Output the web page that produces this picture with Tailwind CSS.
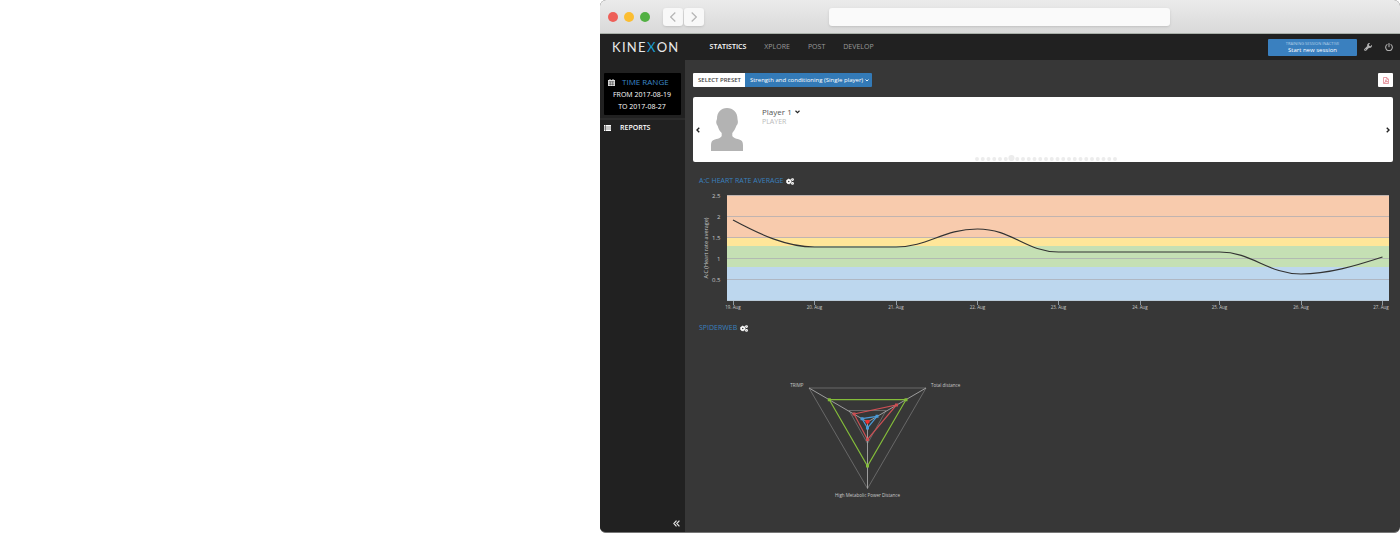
<!DOCTYPE html>
<html lang="en">
<head>
<meta charset="utf-8">
<title>Kinexon – Statistics</title>
<script src="https://cdn.jsdelivr.net/npm/@tailwindcss/browser@4"></script>
</head>
<body class="flex min-h-screen bg-white pl-[600px] font-['Open_Sans',sans-serif] text-white">
<svg class="hidden">
  <symbol id="cogs" viewBox="0 0 16 14">
    <circle cx="5.500" cy="7" r="3.200" fill="none" stroke="currentColor" stroke-width="3.400"/>
    <circle cx="5.500" cy="7" r="4.700" fill="none" stroke="currentColor" stroke-width="1.600" stroke-dasharray="2 1.690"/>
    <circle cx="13" cy="3.200" r="1.800" fill="none" stroke="currentColor" stroke-width="2.200"/>
    <circle cx="13" cy="10.800" r="1.800" fill="none" stroke="currentColor" stroke-width="2.200"/>
  </symbol>
</svg>
<div class="flex min-w-0 flex-1 flex-col overflow-hidden rounded-md border-b border-[#777] bg-[#373737]">

  <div class="flex h-[34px] items-center border-b border-[#a9b0a9] bg-linear-to-b from-[#ebebeb] to-[#d9d9d9] pl-2">
    <div class="flex gap-[6px]">
      <span class="size-[10px] rounded-full bg-[#ee5f58]"></span>
      <span class="size-[10px] rounded-full bg-[#fbbd31]"></span>
      <span class="size-[10px] rounded-full bg-[#52b043]"></span>
    </div>
    <div class="ml-[13px] flex gap-px">
      <button aria-label="Back" class="flex h-[18px] w-5 items-center justify-center rounded-[3px] bg-[#f8f8f8] shadow-sm"><svg class="h-[10px] w-[6px]" viewBox="0 0 6 10" fill="none" stroke="#b5b5b5" stroke-width="1.200"><path d="M5.300.5.700 5l4.600 4.500"/></svg></button>
      <button aria-label="Forward" class="flex h-[18px] w-5 items-center justify-center rounded-[3px] bg-[#f8f8f8] shadow-sm"><svg class="h-[10px] w-[6px]" viewBox="0 0 6 10" fill="none" stroke="#b5b5b5" stroke-width="1.200"><path d="M.700.5 5.300 5 .700 9.500"/></svg></button>
    </div>
    <input aria-label="Address" class="ml-[125px] h-[18px] w-[341px] rounded-[3px] bg-[#fafafa] px-2 text-[9px] text-black shadow-sm">
  </div>

  <header class="flex h-[26px] items-center bg-[#212121] pr-[7px] pl-3">
    <a href="#" aria-label="KINEXON" class="flex font-['Lato',sans-serif] text-[13px] leading-[14px] tracking-widest text-[#e8e8e8]">KINE<span class="text-[#1b9dd0]">X</span>ON</a>
    <nav class="ml-[30px] flex gap-[18px] text-[7px] text-[#9a9a9a]">
      <a href="#" class="font-semibold text-white">STATISTICS</a>
      <a href="#">XPLORE</a>
      <a href="#">POST</a>
      <a href="#">DEVELOP</a>
    </nav>
    <button class="ml-auto flex h-[17px] w-[89px] flex-col items-center justify-center rounded-[1px] bg-[#3a80bf]">
      <span class="text-[4px] leading-[6px] text-[#b5d0e8]">TRAINING SESSION INACTIVE</span>
      <span class="text-[6px] leading-[7px]">Start new session</span>
    </button>
    <button aria-label="Settings" class="ml-[7px] text-[#b0b0b0]"><svg class="size-2" viewBox="0 0 16 16" fill="currentColor"><path d="M15.800 3.600 13 6.300l-2.600-.700-.700-2.600L12.400.200A4.600 4.600 0 0 0 6.500 6L.700 11.800a2 2 0 0 0 0 2.900l.600.600a2 2 0 0 0 2.900 0L10 9.500a4.600 4.600 0 0 0 5.800-5.900zM2.700 14.300a1 1 0 1 1 0-2 1 1 0 0 1 0 2z"/></svg></button>
    <button aria-label="Log out" class="ml-[13px] text-[#b0b0b0]"><svg class="size-2" viewBox="0 0 16 16" fill="none" stroke="currentColor" stroke-width="2.200" stroke-linecap="round"><path d="M4 3.200a6.700 6.700 0 1 0 8 0M8 1v6.500"/></svg></button>
  </header>

  <div class="flex flex-1">
    <aside class="flex w-[85px] flex-col bg-[#212121]">
      <button class="mt-[13px] mr-[4px] ml-[4px] h-[42px] rounded-[1px] bg-black text-[7px] leading-[12px]">
        <span class="flex items-center pl-[4px] text-[8px] leading-[14px] text-[#3a86c8]">
          <svg class="mr-[7px] h-[7px] w-[7px] text-[#ddd]" viewBox="0 0 14 14"><path fill="currentColor" d="M0 2h3V0h2v2h4V0h2v2h3v12H0z"/><path stroke="#000" stroke-width=".700" d="M1.500 5h11M1.500 8h11M1.500 11h11M4.700 5v8M9.300 5v8"/></svg>TIME RANGE</span>
        <span class="block pr-px">FROM 2017-08-19</span>
        <span class="block pr-px">TO 2017-08-27</span>
      </button>
      <a href="#" class="mt-[3px] flex items-center border-t-2 border-[#2b2b2b] pt-[3px] pl-1 text-[7px] leading-[10px] font-semibold">
        <svg class="mr-[9px] h-[6px] w-[7px]" viewBox="0 0 14 12" fill="currentColor"><path d="M0 0h3v2.500H0zM4 0h10v2.500H4zM0 3.200h3v2.400H0zM4 3.200h10v2.400H4zM0 6.400h3v2.400H0zM4 6.400h10v2.400H4zM0 9.600h3V12H0zM4 9.600h10V12H4z"/></svg>REPORTS</a>
      <button aria-label="Collapse sidebar" class="mt-auto mr-[5px] mb-[5px] self-end"><svg class="size-[7px]" viewBox="0 0 12 12" fill="none" stroke="#e5e5e5" stroke-width="2"><path d="M6 1 1.500 6 6 11M11 1 6.500 6l4.500 5"/></svg></button>
    </aside>

    <main class="min-w-0 flex-1 pt-[13px] pr-[7px] pl-2">
      <div class="flex h-[14px] items-stretch text-[6px]">
        <span class="flex items-center rounded-l-[1px] bg-white pr-1 pl-[5px] font-semibold text-[#444]">SELECT PRESET</span>
        <button class="flex items-center gap-[2px] rounded-r-[1px] bg-[#337ab7] pr-[3px] pl-[5px]">Strength and conditioning (Single player)<svg class="h-[3px] w-1" viewBox="0 0 8 6" fill="none" stroke="currentColor" stroke-width="1.800"><path d="m1 1 3 3 3-3"/></svg></button>
        <button aria-label="Export PDF" class="ml-auto flex w-[15px] items-center justify-center rounded-[1px] bg-white"><svg class="h-[7px] w-[6px]" viewBox="0 0 12 14" fill="none" stroke="#dc6b78" stroke-width="1.300"><path d="M1 1h6.500L11 4.500V13H1zM7.500 1v3.500H11M3 11c2-1 3-4 2.500-5.500C6 8 7.500 9.500 9.500 9.500 7 9 5 9.500 3 11z"/></svg></button>
      </div>

      <section class="relative mt-[10px] flex h-[65px] items-center rounded-[2px] bg-white px-[3px] text-[#555]">
        <button aria-label="Previous player"><svg class="h-[6px] w-1" viewBox="0 0 8 12" fill="none" stroke="#222" stroke-width="2.800"><path d="M6.500 1.500 2 6l4.500 4.500"/></svg></button>
        <svg class="ml-[11px] h-[43px] w-8 shrink-0" viewBox="0 0 32 43" fill="#b3b3b3"><path d="M6 11C6 4 10 0 16 0s10.500 4 10.500 11c0 1 .7 2 .3 4-.3 1.500-1 2-1.500 3-1 3-2.500 5-4 7v3c1 2.500 7 3 9 4.500 1.500 1 1.700 3 1.700 5.500v5H0v-5c0-2.500.2-4.500 1.700-5.500C4 31 10 30.500 10.700 28v-3c-2-2-3.200-4-4-7-.8-1-1.200-2-1.400-3-.3-1.700.4-3 .7-4z"/></svg>
        <div class="ml-[19px] self-start pt-2">
          <button class="flex items-center gap-[3px] text-[8px] leading-[13px]">Player 1<svg class="h-1 w-[5px]" viewBox="0 0 10 7" fill="none" stroke="#222" stroke-width="2.200"><path d="m1 1 4 4 4-4"/></svg></button>
          <p class="text-[7px] leading-[8px] text-[#bbb]">PLAYER</p>
        </div>
        <button aria-label="Next player" class="ml-auto"><svg class="h-[6px] w-1" viewBox="0 0 8 12" fill="none" stroke="#222" stroke-width="2.800"><path d="M1.500 1.500 6 6l-4.500 4.500"/></svg></button>
        <svg class="absolute bottom-[1px] left-[282px] h-[6px] w-[142px]" viewBox="0 0 142 6" fill="none" stroke="#ececec" stroke-linecap="round"><path stroke-width="4" stroke-dasharray="0 5.750" d="M2 4h139"/><path stroke-width="6" d="M36.400 3h.1"/></svg>
      </section>

      <h2 class="mt-[14px] flex items-center gap-[2px] pl-[6px] text-[7px] leading-[10px] text-[#3a80bf]">A:C HEART RATE AVERAGE<button aria-label="Chart settings" class="text-white"><svg class="block h-[7px] w-2"><use href="#cogs"/></svg></button></h2>
      <svg class="mt-[2px] block w-full" viewBox="0 0 700 126" role="img" aria-label="A:C heart rate average by day">
        <path fill="#f8cbad" d="M34 7h662v43H34z"/>
        <path fill="#ffe699" d="M34 50h662v8H34z"/>
        <path fill="#c5e0b4" d="M34 58h662v21H34z"/>
        <path fill="#bdd7ee" d="M34 79h662v34H34z"/>
        <path fill="none" stroke="#a9a9b0" stroke-opacity=".7" d="M34 7.500h662M34 28.500h662M34 49.500h662M34 70.500h662M34 91.500h662"/>
        <path fill="none" stroke="#b8c4d0" stroke-opacity=".7" d="M34 112.500h662M40.500 113v4M121.500 113v4M203.500 113v4M284.500 113v4M365.500 113v4M447.500 113v4M526.500 113v4M608.500 113v4M689.500 113v4"/>
        <path fill="none" stroke="#333" stroke-width="1.200" d="M40 32C68 47 94 59 121.500 59H203C235 59 250 41 284.500 41S333 64 365.500 64H526.500C559 64 575 86 608 86C635 86 662 78 689.500 69"/>
        <g transform="scale(.5)" fill="#c8c8c8">
          <g font-size="12" text-anchor="end">
            <text x="55" y="19">2.5</text><text x="55" y="61">2</text><text x="55" y="103">1.5</text><text x="55" y="145">1</text><text x="55" y="187">0.5</text>
          </g>
          <text font-size="11" text-anchor="middle" transform="translate(30 120) rotate(-90)">A:C (Heart rate average)</text>
          <g font-size="9" text-anchor="middle">
            <text x="80" y="242">19. Aug</text><text x="243" y="242">20. Aug</text><text x="406" y="242">21. Aug</text><text x="569" y="242">22. Aug</text><text x="731" y="242">23. Aug</text><text x="894" y="242">24. Aug</text><text x="1053" y="242">25. Aug</text><text x="1216" y="242">26. Aug</text><text x="1376" y="242">27. Aug</text>
          </g>
        </g>
      </svg>

      <h2 class="mt-[9px] flex items-center gap-[3px] pl-[6px] text-[7px] leading-[10px] text-[#3a80bf]">SPIDERWEB<button aria-label="Spiderweb settings" class="text-white"><svg class="block h-[7px] w-2"><use href="#cogs"/></svg></button></h2>
      <svg class="mt-[45px] ml-[90px] block h-[122px] w-[180px]" viewBox="0 0 180 122" role="img" aria-label="Spiderweb chart" fill="none">
        <path stroke="#757575" stroke-width=".8" d="M26 10h117L84.500 110.500zM66 32.500h37L84.500 65.500z"/>
        <path stroke="#a8a8a8" stroke-width=".9" d="M84.500 44 26 10M84.500 44 143 10M84.500 44v66.500"/>
        <path stroke="#84bd3a" stroke-width="1.200" d="M46.300 21.700H123L84.500 88z"/>
        <path fill="#84bd3a" d="M44.800 20.200h3v3h-3zM121.500 20.200h3v3h-3zM83 86.500h3v3h-3z"/>
        <path stroke="#cc5054" stroke-width="1.200" d="M71 36 113.500 27 84.500 61.500z"/>
        <path fill="#cc5054" d="M69.500 34.500h3v3h-3zM112 25.500h3v3h-3zM83 60h3v3h-3z"/>
        <path stroke="#4a9ad8" stroke-width="1.200" d="M79 40.700 94 38.300 84.500 50z"/>
        <path fill="#4a9ad8" d="M77.500 39.200h3v3h-3zM92.500 36.800h3v3h-3zM83 48.500h3v3h-3z"/>
        <path fill="#f03030" d="M82.500 42h4v2.500l-2 1.700-2-1.700z"/>
        <g transform="scale(.5)" fill="#c8c8c8" font-size="9">
          <text x="41" y="17" text-anchor="end">TRIMP</text><text x="296" y="17">Total distance</text><text x="169" y="237" text-anchor="middle">High Metabolic Power Distance</text>
        </g>
      </svg>
    </main>
  </div>
</div>
</body>
</html>
